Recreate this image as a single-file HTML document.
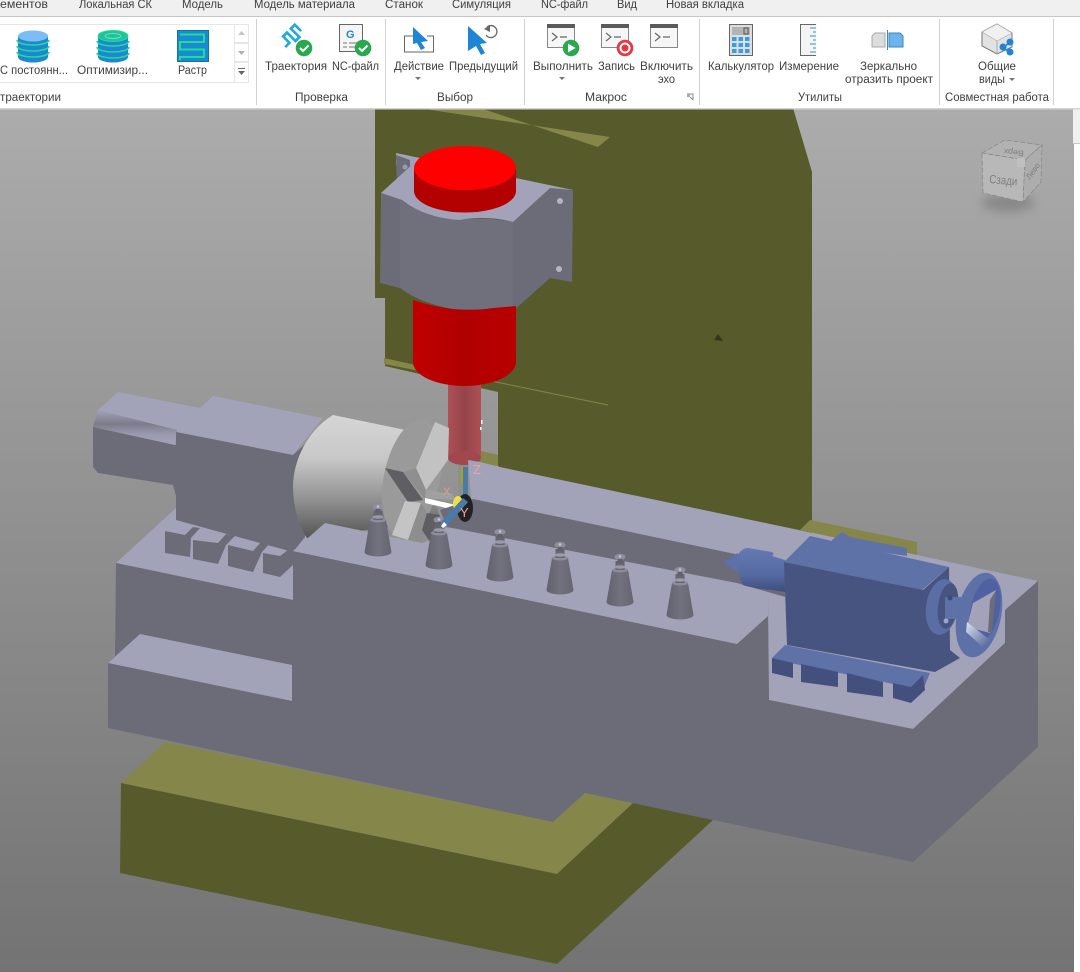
<!DOCTYPE html>
<html lang="ru">
<head>
<meta charset="utf-8">
<title>Станок</title>
<style>
html,body{margin:0;padding:0;width:1080px;height:972px;overflow:hidden;background:#fff}
svg{display:block}
text{font-family:"Liberation Sans","DejaVu Sans",sans-serif;font-size:11.5px;fill:#3f3f3f}
</style>
</head>
<body>
<svg xmlns="http://www.w3.org/2000/svg" width="1080" height="972" viewBox="0 0 1080 972">
<defs>
<linearGradient id="bg" x1="0" y1="108" x2="0" y2="972" gradientUnits="userSpaceOnUse"><stop offset="0" stop-color="#acacac"/><stop offset="1" stop-color="#737373"/></linearGradient>
<linearGradient id="cyl" x1="0" y1="0" x2="0" y2="1"><stop offset="0" stop-color="#d6d6d6"/><stop offset=".35" stop-color="#c8c8c8"/><stop offset=".7" stop-color="#8f8f8f"/><stop offset="1" stop-color="#555"/></linearGradient>
<linearGradient id="holder" x1="0" y1="0" x2="1" y2="0"><stop offset="0" stop-color="#ad5055"/><stop offset=".5" stop-color="#94444a"/><stop offset="1" stop-color="#ad5055"/></linearGradient>
<linearGradient id="rd" x1="0" y1="0" x2="1" y2="0"><stop offset="0" stop-color="#c00000"/><stop offset=".5" stop-color="#b00000"/><stop offset="1" stop-color="#b80000"/></linearGradient>
<linearGradient id="cone" x1="0" y1="0" x2="1" y2="0"><stop offset="0" stop-color="#62626e"/><stop offset=".5" stop-color="#72727e"/><stop offset="1" stop-color="#666672"/></linearGradient>
<linearGradient id="grv" x1="0" y1="0" x2="0" y2="1"><stop offset="0" stop-color="#a2a3b8"/><stop offset=".4" stop-color="#7c7c8a"/><stop offset=".7" stop-color="#9a9bb0"/><stop offset="1" stop-color="#a2a3b8"/></linearGradient>
<linearGradient id="barrel" x1="0" y1="0" x2="0" y2="1"><stop offset="0" stop-color="#6478b2"/><stop offset=".6" stop-color="#566aa2"/><stop offset="1" stop-color="#3f4d7c"/></linearGradient>
<linearGradient id="spoke" x1="0" y1="0" x2="1" y2="1"><stop offset="0" stop-color="#dfe4f2"/><stop offset="1" stop-color="#4a5c92"/></linearGradient>
<filter id="blur" x="-50%" y="-50%" width="200%" height="200%"><feGaussianBlur stdDeviation="5"/></filter>
<g id="cn">
<path d="M-8-38L-13.5-6A13.5 4.5 0 0 0 13.5-6L8-38Z" fill="url(#cone)"/>
<ellipse cx="0" cy="-38" rx="8" ry="2.5" fill="#8c8c9c"/>
<rect x="-4.5" y="-47" width="9" height="9" fill="#666672"/>
<ellipse cx="0" cy="-41" rx="5.5" ry="1.8" fill="#9a9aaa"/>
<ellipse cx="0" cy="-51" rx="5.5" ry="3.2" fill="#8e8e9e"/>
<rect x="-2.5" y="-49" width="5" height="4" fill="#62626e"/>
<circle cx="0" cy="-51.5" r="1.3" fill="#c4c4d0"/>
</g>
</defs>

<!-- viewport -->
<rect x="0" y="108" width="1074" height="864" fill="url(#bg)"/>

<!-- column -->
<polygon fill="#575a2b" points="375,108 793,108 812,172 812,535 500,470 498,465 498,392 385,366 385,298 375,298"/>
<polygon fill="#85874a" points="418,108 480,108 598,147 610,137"/>
<polygon fill="#85874a" points="384,358 420,366 420,371 384,364"/>
<line x1="384" y1="359" x2="608" y2="405" stroke="#85874a" stroke-width="1"/>
<polygon fill="#85874a" points="478,450 498,455 498,466 478,463"/>
<polygon fill="#35371c" points="714,340 718,334 723,341"/>

<!-- lower olive base -->
<polygon fill="#85874a" points="165,742 121,783 557,874 633,803 585,793 553,822"/>
<polygon fill="#575a2b" points="121,783 120,873 557,964 713,820 633,803 557,874"/>

<!-- olive strip behind tailstock -->
<polygon fill="#85874a" points="810,520 917,542 917,555 800,530"/>

<!-- spindle flange and body -->
<polygon fill="#a2a3b8" points="396,153 573,190 550,195 396,165"/>
<polygon fill="#6c6c78" points="396,155 410,160 410,190 397,190"/>
<polygon fill="#6c6c78" points="550,188 573,190 572,282 550,278"/>
<path fill="#6c6c78" d="M381 193L380 283 400 288Q420 303 453 309Q475 311 493 308L513 311 550 278V188L513 222Q480 216 460 220Q425 215 402 200Z"/>
<path fill="#70707c" d="M400 200Q425 215 460 220Q480 216 513 222V311L493 308Q475 311 453 309Q420 303 400 288Z"/>
<path fill="#a2a3b8" d="M381 193L415 162 550 188 513 222Q485 215 460 220Q425 218 402 200L393 197Z"/>
<circle cx="560" cy="201" r="3" fill="#b4b4c4"/><circle cx="559" cy="269" r="3" fill="#b4b4c4"/><circle cx="405" cy="167" r="2.5" fill="#9a9aaa"/>

<!-- tool holder -->
<rect x="448" y="375" width="33" height="83" fill="url(#holder)"/>
<ellipse cx="464.500" cy="458" rx="16.500" ry="7" fill="#a0484d"/>

<!-- red parts -->
<path d="M414 168V191A51 21.500 0 0 0 516 191V168Z" fill="#b30000"/>
<ellipse cx="465" cy="168" rx="51" ry="22" fill="#ff0000"/>
<path d="M413 300Q430 306 453 309Q475 311 493 308L516 306V362A51.500 24 0 0 1 413 362Z" fill="url(#rd)"/>

<!-- back rail -->
<polygon fill="#a2a3b8" points="468,460 480,462 500,467 917,555 1038,581 1005,610 1005,643 913,729 769,700 768,590 473,520"/>

<!-- headstock -->
<polygon fill="#a2a3b8" points="116,563 176,508 310,535 325,523 400,539 400,560 293,600"/>
<polygon fill="#a2a3b8" points="98,410 118,392 200,408 213,396 323,418 293,455 176,432"/>
<polygon fill="#6c6c78" points="93,427 176,445 176,496 173,485 98,473 93,467"/>
<polygon fill="url(#grv)" points="98,410 177,430 175,445 93,427"/>
<polygon fill="#6c6c78" points="176,432 293,455 310,440 305,537 293,552 176,520"/>

<!-- chuck -->
<path d="M333 415L420 433 440 520 307 538C298 525 293 505 293 487C293 460 308 430 333 415Z" fill="url(#cyl)"/>
<ellipse cx="412" cy="478" rx="28" ry="60" transform="rotate(12 412 478)" fill="#9a9a9a"/>
<polygon fill="#c2c2c2" points="435,422 449,428 448,460 426,490 416,468"/>
<polygon fill="#8f8f8f" points="403,472 416,468 426,490 425,499"/>
<polygon fill="#5f5f63" points="385,468 403,472 423,500 408,502"/>
<polygon fill="#a0a0a0" points="426,490 453,494 455,500 425,498"/>
<polygon fill="#c4c4c4" points="405,501 421,503 408,540 392,535"/>
<polygon fill="#8e8e8e" points="421,503 427,513 422,545 408,540"/>
<polygon fill="#5f5f63" points="427,513 440,515 432,545 422,530"/>
<polygon fill="#fff" points="425,498 456,505 455,510 425,503"/>

<!-- tool -->
<rect x="458" y="465" width="10" height="35" fill="#8d8f8a"/>
<rect x="461" y="467" width="4" height="18" fill="#a8a020"/>
<rect x="463" y="467" width="5" height="35" fill="#4a7aa8"/>
<rect x="481" y="420" width="1.500" height="4" fill="#fff"/><rect x="480" y="427" width="1.500" height="3" fill="#fff"/>

<!-- main grey faces -->
<polygon fill="#6c6c78" points="116,563 293,600 293,551 737,644 768,616 769,700 913,729 1005,643 1005,610 1038,581 1038,747 913,862 585,793 553,822 108,728 108,663 115,656"/>
<polygon fill="#a2a3b8" points="140,634 292,665 292,701 108,663"/>

<!-- front rail top -->
<polygon fill="#a2a3b8" points="293,551 325,523 392,537 422,543 436,538 447,527 737,583 768,590 768,616 737,644"/>
<!-- dark channel -->
<path fill="#6c6c78" d="M473 499L740 555 785 565V597L737 583 447 527 440 510Z"/>

<!-- base T-slot blocks -->
<polygon fill="#6c6c78" points="165,531 185,535 193,527 200,528 191,538 190,557 165,553"/>
<polygon fill="#6c6c78" points="193,540 218,543 226,534 235,536 226,545 218,564 193,559"/>
<polygon fill="#6c6c78" points="228,545 253,551 261,542 270,543 262,552 253,572 228,566"/>
<polygon fill="#6c6c78" points="263,553 280,556 293,546 293,565 280,577 263,573"/>

<!-- cones -->
<use href="#cn" x="378" y="558"/><use href="#cn" x="439" y="571"/><use href="#cn" x="500" y="583"/><use href="#cn" x="560" y="596"/><use href="#cn" x="620" y="608"/><use href="#cn" x="680" y="621"/>

<!-- triad -->
<ellipse cx="465" cy="508" rx="8" ry="14" fill="#222"/>
<ellipse cx="458" cy="504" rx="5" ry="8" fill="#efe04a"/>
<polygon fill="#4a7aa8" points="463,498 468,502 446,527 441,522"/>
<polygon fill="#fff" points="444,522 447,525 443,528 441,526"/>
<text x="473" y="474" style="font-size:13px;fill:#f4a0a0">Z</text>
<text x="443" y="495" style="font-size:11px;fill:#e89a9a">X</text>
<text x="460" y="517" style="font-size:13px;fill:#f4a0a0">Y</text>

<!-- live centre -->
<polygon fill="#5d70a8" points="723,562 738,553 738,573"/>
<path fill="url(#barrel)" d="M737 556Q742 548 748 548L772 552Q775 554 772 556L785 560V592L772 590Q750 588 743 585Q737 575 737 556Z"/>

<!-- tailstock -->
<polygon fill="#5f72a8" points="832,540 842,532 850,537 907,548 907,556 832,545"/>
<polygon fill="#5f72a8" points="784,562 810,536 949,567 922,590"/>
<polygon fill="#46547f" points="784,562 923,590 949,567 950,650 960,658 935,672 787,645"/>
<polygon fill="#5f72a8" points="772,658 785,645 930,673 923,690 795,664"/>
<polygon fill="#43507e" points="772,658 793,663 793,678 772,673"/>
<polygon fill="#5f72a8" points="793,663 801,654 808,655 801,664 838,672 845,664 853,665 847,673"/>
<polygon fill="#43507e" points="801,664 838,672 838,687 801,682"/>
<polygon fill="#43507e" points="847,673 883,682 883,697 847,692"/>
<polygon fill="#43507e" points="893,683 911,687 923,675 925,690 911,703 893,698"/>
<polygon fill="#5f72a8" points="883,682 893,673 900,675 893,683 911,687 923,675 905,670"/>
<!-- hub -->
<ellipse cx="942" cy="607" rx="16" ry="28" transform="rotate(8 942 607)" fill="#5a6da5"/>
<ellipse cx="948" cy="606" rx="10" ry="23" transform="rotate(8 948 606)" fill="#46547f"/>
<rect x="945" y="597" width="20" height="22" fill="#5f72a8"/>
<circle cx="950" cy="598" r="2.500" fill="#3c4a74"/><circle cx="946" cy="621" r="2.500" fill="#9aa6cc"/>
<!-- handwheel -->
<ellipse cx="979" cy="615" rx="22" ry="43" transform="rotate(12 979 615)" fill="#5d70a8"/>
<ellipse cx="985" cy="610" rx="14.500" ry="32" transform="rotate(12 985 610)" fill="#4f61a0"/>
<polygon fill="#a2a3b8" points="973,603 996,590 992,620 990,633 967,627"/>
<polygon fill="#6c6c78" points="990,600 996,590 992,632 988,632"/>
<polygon fill="url(#spoke)" points="967,622 990,640 984,648 966,632"/>

<!-- view cube -->
<ellipse cx="1008" cy="203" rx="26" ry="9" fill="#707070" opacity=".55" filter="url(#blur)"/>
<polygon fill="#b8b8b8" stroke="#858585" stroke-width=".7" stroke-dasharray="5 2" points="982,153 1025,160 1023,202 983,193"/>
<polygon fill="#b2b2b2" stroke="#858585" stroke-width=".7" stroke-dasharray="5 2" points="982,153 1005,140 1042,145 1025,160"/>
<polygon fill="#adadad" stroke="#858585" stroke-width=".7" stroke-dasharray="5 2" points="1025,160 1042,145 1041,182 1023,202"/>
<rect x="1017" y="158" width="8" height="9" fill="#bfbfbf"/>
<text transform="translate(989,183) rotate(5)" textLength="28" lengthAdjust="spacingAndGlyphs" style="font-size:12px;fill:#7e7e7e">Сзади</text>
<text transform="translate(1024,151) rotate(187)" textLength="20" lengthAdjust="spacingAndGlyphs" style="font-size:8px;fill:#7e7e7e">Верх</text>
<text transform="translate(1030,180) rotate(-55)" textLength="18" lengthAdjust="spacingAndGlyphs" style="font-size:8px;fill:#7e7e7e">Лево</text>

<!-- right strip -->
<rect x="1074" y="108" width="6" height="864" fill="#fff"/>
<rect x="1073" y="108" width="7" height="35" fill="#f0f0f0"/>
<rect x="1073" y="143" width="7" height="1" fill="#c8c8c8"/>

<!-- ribbon -->
<rect x="0" y="0" width="1080" height="108" fill="#fff"/>
<rect x="0" y="0" width="1080" height="16" fill="#f0f0f0"/>
<rect x="0" y="16" width="1080" height="1" fill="#c6c6c6"/>
<rect x="0" y="108" width="1080" height="1.500" fill="#d4d4d4"/>

<!-- tabs -->
<text x="0" y="8" textLength="48" lengthAdjust="spacingAndGlyphs">ементов</text>
<text x="79" y="8" textLength="73" lengthAdjust="spacingAndGlyphs">Локальная СК</text>
<text x="182" y="8" textLength="41" lengthAdjust="spacingAndGlyphs">Модель</text>
<text x="254" y="8" textLength="101" lengthAdjust="spacingAndGlyphs">Модель материала</text>
<text x="385" y="8" textLength="38" lengthAdjust="spacingAndGlyphs">Станок</text>
<text x="452" y="8" textLength="59" lengthAdjust="spacingAndGlyphs">Симуляция</text>
<text x="541" y="8" textLength="47" lengthAdjust="spacingAndGlyphs">NC-файл</text>
<text x="617" y="8" textLength="20" lengthAdjust="spacingAndGlyphs">Вид</text>
<text x="666" y="8" textLength="78" lengthAdjust="spacingAndGlyphs">Новая вкладка</text>

<!-- separators -->
<g fill="#d2d2d2"><rect x="256" y="19" width="1" height="86"/><rect x="385" y="19" width="1" height="86"/><rect x="524" y="19" width="1" height="86"/><rect x="699" y="19" width="1" height="86"/><rect x="939" y="19" width="1" height="86"/><rect x="1053" y="19" width="1" height="86"/></g>

<!-- gallery -->
<rect x="-1" y="24.500" width="249" height="58" fill="none" stroke="#e6e6e6"/>
<rect x="234.500" y="24.500" width="14" height="18" fill="#fff" stroke="#e6e6e6"/>
<rect x="234.500" y="43.500" width="14" height="18" fill="#fff" stroke="#e6e6e6"/>
<rect x="234.500" y="62.500" width="14" height="20" fill="#fff" stroke="#e6e6e6"/>
<polygon points="238,35 245,35 241.500,31" fill="#c4c4c4"/>
<polygon points="238,51 245,51 241.500,55" fill="#b0b0b0"/>
<rect x="238" y="68" width="7" height="1" fill="#666"/><polygon points="238,71 245,71 241.500,75" fill="#666"/>

<!-- stack 1 -->
<path d="M18 36V57A15 5.500 0 0 0 48 57V36Z" fill="#1f85d6"/>
<ellipse cx="33" cy="36" rx="15" ry="5.500" fill="#7dbdf5"/>
<g fill="none" stroke="#1fe08a" stroke-width="1.600"><path d="M17 40A16 5 0 0 0 49 40"/><path d="M17 46A16 5 0 0 0 49 46"/><path d="M17 52A16 5 0 0 0 49 52"/></g>
<!-- stack 2 -->
<path d="M98 36V57A15 5.500 0 0 0 128 57V36Z" fill="#1f85d6"/>
<ellipse cx="113" cy="36" rx="15" ry="5.500" fill="#1bc49a" stroke="#1fe08a"/>
<ellipse cx="113" cy="36" rx="8" ry="2.500" fill="none" stroke="#7bd8c0"/>
<g fill="none" stroke="#1fe08a" stroke-width="1.600"><path d="M97 41A16 5 0 0 0 129 41"/><path d="M97 47A16 5 0 0 0 129 47"/><path d="M97 53A16 5 0 0 0 129 53"/></g>
<!-- raster -->
<rect x="177.500" y="30.500" width="31" height="31" fill="#1a8ad8" stroke="#1570b0"/>
<path d="M180 34.500H204V42H180V49.500H204V57H180V60" fill="none" stroke="#1fe08a" stroke-width="2"/>

<text x="0" y="74" textLength="68" lengthAdjust="spacingAndGlyphs">С постоянн...</text>
<text x="77" y="74" textLength="71" lengthAdjust="spacingAndGlyphs">Оптимизир...</text>
<text x="178" y="74" textLength="29" lengthAdjust="spacingAndGlyphs">Растр</text>
<text x="0" y="101" textLength="61" lengthAdjust="spacingAndGlyphs">траектории</text>

<!-- trajectory icon -->
<path transform="translate(293,35) rotate(-45)" d="M-14 3H-8V-6H-2.500V6H3V-6H8.500V3" fill="none" stroke="#1fa9dc" stroke-width="2.600"/>
<circle cx="304" cy="48" r="8.300" fill="#2aa84f"/><path d="M300 48L303 51 308.500 45.500" fill="none" stroke="#fff" stroke-width="2"/>
<!-- NC icon -->
<rect x="339.500" y="24.500" width="23" height="27" fill="#f5f5f5" stroke="#666"/>
<text x="346" y="38" style="font-size:11px;font-weight:bold;fill:#1f85d6">G</text>
<path d="M343 43H347M349 43H358M343 47H347M349 47H356" stroke="#777" stroke-width="1"/>
<circle cx="363" cy="48" r="8.300" fill="#2aa84f"/><path d="M359 48L362 51 367.500 45.500" fill="none" stroke="#fff" stroke-width="2"/>

<text x="265" y="70" textLength="62" lengthAdjust="spacingAndGlyphs">Траектория</text>
<text x="332" y="70" textLength="47" lengthAdjust="spacingAndGlyphs">NC-файл</text>
<text x="295" y="101" textLength="53" lengthAdjust="spacingAndGlyphs">Проверка</text>

<!-- action icon -->
<path d="M413 36H404.500V52H433.500V36H427" fill="none" stroke="#666"/>
<polygon points="413,27 428,41 421,42 425,48 421,50 417,43 413,44" fill="#1f85d6"/>
<!-- previous icon -->
<polygon points="468,26 487,43 480,44 485,53 481,55 476,46 468,51" fill="#1f85d6"/>
<path d="M487 27A6 6 0 1 1 486 35" fill="none" stroke="#666" stroke-width="1.300"/><polygon points="484,29 490,25 490,32" fill="#666"/>

<text x="394" y="70" textLength="50" lengthAdjust="spacingAndGlyphs">Действие</text>
<text x="449" y="70" textLength="69" lengthAdjust="spacingAndGlyphs">Предыдущий</text>
<polygon points="415,77 421,77 418,80" fill="#777"/>
<text x="437" y="101" textLength="36" lengthAdjust="spacingAndGlyphs">Выбор</text>

<!-- macro icons -->
<g>
<rect x="547.500" y="24.500" width="27" height="23" fill="#f6f6f6" stroke="#888"/><rect x="547" y="24" width="28" height="4" fill="#5a5a5a"/>
<path d="M552 33L557 37 552 41M560 37H567" fill="none" stroke="#666" stroke-width="1.200"/>
<circle cx="571" cy="48" r="8.300" fill="#2aa84f"/><polygon points="568,43.500 575.500,48 568,52.500" fill="#fff"/>
<rect x="601.500" y="24.500" width="27" height="23" fill="#f6f6f6" stroke="#888"/><rect x="601" y="24" width="28" height="4" fill="#5a5a5a"/>
<path d="M606 33L611 37 606 41M614 37H621" fill="none" stroke="#666" stroke-width="1.200"/>
<circle cx="625" cy="48" r="8.300" fill="#e8353f"/><circle cx="625" cy="48" r="5.500" fill="#fff"/><circle cx="625" cy="48" r="3.500" fill="#e8353f"/>
<rect x="650.500" y="24.500" width="27" height="23" fill="#f6f6f6" stroke="#888"/><rect x="650" y="24" width="28" height="4" fill="#5a5a5a"/>
<path d="M655 33L660 37 655 41M663 37H670" fill="none" stroke="#666" stroke-width="1.200"/>
</g>
<text x="533" y="70" textLength="60" lengthAdjust="spacingAndGlyphs">Выполнить</text>
<text x="598" y="70" textLength="37" lengthAdjust="spacingAndGlyphs">Запись</text>
<text x="640" y="70" textLength="53" lengthAdjust="spacingAndGlyphs">Включить</text>
<text x="658" y="83" textLength="17" lengthAdjust="spacingAndGlyphs">эхо</text>
<polygon points="559,77 565,77 562,80" fill="#777"/>
<text x="585" y="101" textLength="42" lengthAdjust="spacingAndGlyphs">Макрос</text>
<path d="M687 94H693V100M690 97L693 100" fill="none" stroke="#888"/><rect x="687" y="94" width="3" height="3" fill="#aaa"/>

<!-- calculator -->
<rect x="729.500" y="24.500" width="23" height="31" fill="#dedede" stroke="#666"/>
<rect x="732" y="27" width="18" height="8" fill="#b4b4b4"/><rect x="744" y="28" width="4" height="6" fill="none" stroke="#555"/>
<g fill="#3b9de0"><rect x="732" y="37" width="4.500" height="4"/><rect x="738.500" y="37" width="4.500" height="4"/><rect x="745" y="37" width="4.500" height="4"/><rect x="732" y="43" width="4.500" height="4"/><rect x="738.500" y="43" width="4.500" height="4"/><rect x="745" y="43" width="4.500" height="4"/><rect x="732" y="49" width="4.500" height="4"/><rect x="738.500" y="49" width="4.500" height="4"/><rect x="745" y="49" width="4.500" height="4"/></g>
<!-- ruler -->
<rect x="800.500" y="24.500" width="16" height="31" fill="#f4f4f4" stroke="none"/>
<path d="M816 24.500H800.500V55.500H816" fill="none" stroke="#666"/>
<path d="M810 28H816M813 32H816M810 36H816M813 40H816M810 44H816M813 48H816M810 52H816" stroke="#3b8fd0" stroke-width="1"/>
<!-- mirror -->
<polygon points="872,36 875,33 885,33 885,47 872,47" fill="#dcdcdc" stroke="#aaa"/>
<rect x="887" y="30" width="1" height="20" fill="#3a86b8"/>
<polygon points="889,33 900,33 903,36 903,47 889,47" fill="#6cb4ee" stroke="#3a86b8"/>
<!-- shared views -->
<polygon points="997,24 1012,33 1012,47 997,54 982,46 982,32" fill="#e2e2e2" stroke="#777"/>
<polygon points="997,24 1012,33 997,41 982,32" fill="#f0f0f0" stroke="#aaa" stroke-width=".6"/>
<path d="M997 41V54" stroke="#aaa"/>
<g stroke="#1f85d6" stroke-width="1.500"><path d="M1003 48L1010 42M1003 48L1010 52"/></g>
<circle cx="1003" cy="47" r="3.500" fill="#1f85d6"/><circle cx="1010" cy="42" r="3.500" fill="#1f85d6"/><circle cx="1010" cy="52" r="3.500" fill="#1f85d6"/>

<text x="708" y="70" textLength="66" lengthAdjust="spacingAndGlyphs">Калькулятор</text>
<text x="779" y="70" textLength="60" lengthAdjust="spacingAndGlyphs">Измерение</text>
<text x="860" y="70" textLength="57" lengthAdjust="spacingAndGlyphs">Зеркально</text>
<text x="845" y="83" textLength="88" lengthAdjust="spacingAndGlyphs">отразить проект</text>
<text x="798" y="101" textLength="44" lengthAdjust="spacingAndGlyphs">Утилиты</text>
<text x="978" y="70" textLength="38" lengthAdjust="spacingAndGlyphs">Общие</text>
<text x="979" y="83" textLength="26" lengthAdjust="spacingAndGlyphs">виды</text>
<polygon points="1009,78 1015,78 1012,81" fill="#777"/>
<text x="945" y="101" textLength="104" lengthAdjust="spacingAndGlyphs">Совместная работа</text>
</svg>
</body>
</html>
